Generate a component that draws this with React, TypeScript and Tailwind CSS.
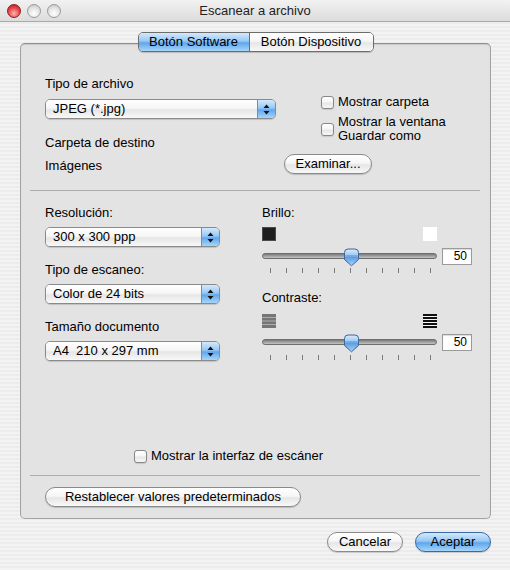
import React from 'react';

// Aqua-style controls, drawn with Tailwind classes
const glassWhite =
  'bg-[linear-gradient(to_bottom,#ffffff_0%,#f6f6f6_45%,#e6e6e6_55%,#f8f8f8_100%)]';
const glassBlue =
  'bg-[linear-gradient(to_bottom,#d4e9fc_0%,#97c8f3_45%,#5fa6ec_55%,#a6d6fb_100%)]';

function cn(...parts: (string | false | undefined)[]) {
  return parts.filter(Boolean).join(' ');
}

function Checkbox() {
  return (
    <div
      className={`w-[13px] h-[13px] shrink-0 rounded-[3px] border border-[#878787] ${glassWhite} shadow-[0_1px_1px_rgba(0,0,0,0.12)]`}
    />
  );
}

function PopUp({ value, className }: { value: string; className: string }) {
  return (
    <div
      className={`flex h-[20px] rounded-[5px] border border-[#8a8a8a] overflow-hidden shadow-[0_1px_1px_rgba(0,0,0,0.15)] ${className}`}
    >
      <div className={`flex-1 flex items-center pl-[7px] ${glassWhite}`}>{value}</div>
      <div
        className={`w-[18px] flex items-center justify-center border-l border-[#6f8fb5] ${glassBlue}`}
      >
        <svg width="7" height="11" viewBox="0 0 7 11">
          <path d="M3.5 0.5 L6.5 4 H0.5 Z" fill="#111" />
          <path d="M3.5 10.5 L6.5 7 H0.5 Z" fill="#111" />
        </svg>
      </div>
    </div>
  );
}

function PushButton({
  label,
  className,
  primary,
}: {
  label: string;
  className: string;
  primary?: boolean;
}) {
  return (
    <div
      className={cn(
        'h-[20px] rounded-full border flex items-center justify-center shadow-[0_1px_1px_rgba(0,0,0,0.18)]',
        primary ? `border-[#3a6aa3] ${glassBlue}` : `border-[#8a8a8a] ${glassWhite}`,
        className
      )}
    >
      {label}
    </div>
  );
}

function Thumb() {
  return (
    <svg width="17" height="19" viewBox="0 0 17 19" className="absolute left-[80px] top-[-6px]">
      <defs>
        <linearGradient id="thumbGrad" x1="0" y1="0" x2="0" y2="1">
          <stop offset="0" stopColor="#d8ecfd" />
          <stop offset="0.45" stopColor="#8fc3f2" />
          <stop offset="0.5" stopColor="#5a9fe6" />
          <stop offset="1" stopColor="#a9d6fb" />
        </linearGradient>
      </defs>
      <path
        d="M1.5 4.5 Q1.5 1 5 1 H12 Q15.5 1 15.5 4.5 V11.5 L8.5 17.8 L1.5 11.5 Z"
        fill="url(#thumbGrad)"
        stroke="#3f6592"
        strokeWidth="1"
      />
      <path d="M2.5 8 H14.5" stroke="#4a7fbf" strokeWidth="0.8" />
    </svg>
  );
}

function Slider() {
  return (
    <div className="flex items-center h-[18px]">
      <div className="relative w-[175px] h-[6px] rounded-full border border-[#6e6e6e] bg-[linear-gradient(to_bottom,#7a7a7a,#c4c4c4)]">
        <Thumb />
      </div>
      <div className="ml-[5px] w-[30px] h-[17px] border border-[#9a9a9a] bg-white text-[12px] leading-[15px] text-right pr-[4px] shadow-[inset_0_1px_1px_rgba(0,0,0,0.15)]">
        50
      </div>
    </div>
  );
}

function Ticks({ className }: { className: string }) {
  return (
    <div className={`flex justify-between w-[161px] ml-[8px] h-[5px] ${className}`}>
      {Array.from({ length: 11 }).map((_, i) => (
        <div key={i} className="w-px h-full bg-[#7a7a7a]" />
      ))}
    </div>
  );
}

function TrafficLight({ red }: { red?: boolean }) {
  return (
    <div
      className={cn(
        'w-[14px] h-[14px] rounded-full border',
        red
          ? 'border-[#8e1c1c] bg-[radial-gradient(circle_at_50%_70%,#ffb3a8_0%,#e5454a_55%,#b0151d_100%)]'
          : 'border-[#9b9b9b] bg-[radial-gradient(circle_at_50%_70%,#ffffff_0%,#e2e2e2_55%,#b9b9b9_100%)]'
      )}
    />
  );
}

export default function App() {
  return (
    <div className="w-[510px] h-[570px] overflow-hidden text-[13px] leading-[16px] text-black font-['Lucida_Grande','Liberation_Sans',Arial,sans-serif] bg-[repeating-linear-gradient(to_bottom,#f3f3f3_0px,#f3f3f3_2px,#ececec_2px,#ececec_4px)]">
      {/* Title bar */}
      <div className="grid grid-cols-[1fr_auto_1fr] items-center h-[22px] border-b border-[#a9a9a9] bg-[linear-gradient(to_bottom,#f2f2f2,#dcdcdc)]">
        <div className="flex items-center gap-[6px] pl-[7px]">
          <TrafficLight red />
          <TrafficLight />
          <TrafficLight />
        </div>
        <div className="text-[#222]">Escanear a archivo</div>
        <div />
      </div>

      {/* Tabs */}
      <div className="relative z-10 mt-[10px] flex justify-center">
        <div className="flex h-[20px] ml-[1px] rounded-[5px] border border-[#6d6d6d] overflow-hidden shadow-[0_1px_1px_rgba(0,0,0,0.18)]">
          <div className={`w-[110px] flex items-center justify-center ${glassBlue}`}>Botón Software</div>
          <div className={`w-[124px] flex items-center justify-center border-l border-[#6d6d6d] ${glassWhite}`}>
            Botón Dispositivo
          </div>
        </div>
      </div>

      {/* Tab box */}
      <div className="mx-[20px] -mt-[9px] w-[471px] h-[476px] rounded-[5px] border border-[#a3a3a3] border-t-[#8f8f8f] bg-[#e3e3e3] shadow-[inset_0_1px_1px_rgba(0,0,0,0.12)] flex flex-col">
        {/* File type / destination */}
        <div className="flex pl-[24px] pt-[32px]">
          <div className="w-[231px] flex flex-col">
            <div>Tipo de archivo</div>
            <PopUp value="JPEG (*.jpg)" className="w-[231px] mt-[7px]" />
            <div className="mt-[16px]">Carpeta de destino</div>
            <div className="mt-[7px]">Imágenes</div>
          </div>
          <div className="ml-[8px] flex flex-col">
            <div className="mt-[18px] pl-[37px] flex items-center gap-[4px]">
              <Checkbox />
              <span>Mostrar carpeta</span>
            </div>
            <div className="mt-[5px] pl-[37px] flex items-center gap-[4px]">
              <Checkbox />
              <span className="leading-[14px]">
                Mostrar la ventana
                <br />
                Guardar como
              </span>
            </div>
            <PushButton label="Examinar..." className="mt-[11px] w-[88px]" />
          </div>
        </div>

        <div className="mt-[16px] ml-[9px] mr-[10px] border-t border-[#adadad]" />

        {/* Scan settings */}
        <div className="flex pl-[24px] mt-[14px]">
          <div className="w-[175px] flex flex-col">
            <div>Resolución:</div>
            <PopUp value="300 x 300 ppp" className="w-[175px] mt-[6px]" />
            <div className="mt-[15px]">Tipo de escaneo:</div>
            <PopUp value="Color de 24 bits" className="w-[175px] mt-[6px]" />
            <div className="mt-[15px]">Tamaño documento</div>
            <PopUp value="A4  210 x 297 mm" className="w-[175px] mt-[6px] whitespace-pre" />
          </div>
          <div className="ml-[42px] w-[210px] flex flex-col">
            <div>Brillo:</div>
            <div className="mt-[6px] w-[175px] flex justify-between">
              <div className="w-[14px] h-[14px] bg-[#1e1e1e] border border-[#4a4a4a]" />
              <div className="w-[14px] h-[14px] bg-white" />
            </div>
            <div className="mt-[6px]">
              <Slider />
            </div>
            <Ticks className="mt-[3px]" />
            <div className="mt-[17px]">Contraste:</div>
            <div className="mt-[8px] w-[175px] flex justify-between">
              <svg width="14" height="14" viewBox="0 0 14 14">
                <rect x="0" y="0" width="14" height="14" fill="#767676" />
                <rect x="0" y="3" width="14" height="1" fill="#adadad" />
                <rect x="0" y="6.5" width="14" height="1" fill="#adadad" />
                <rect x="0" y="10" width="14" height="1" fill="#adadad" />
              </svg>
              <svg width="14" height="14" viewBox="0 0 14 14">
                <rect x="0" y="0" width="14" height="14" fill="#f7f7f7" />
                <rect x="0" y="0" width="14" height="2" fill="#111" />
                <rect x="0" y="3" width="14" height="2" fill="#111" />
                <rect x="0" y="6" width="14" height="2" fill="#111" />
                <rect x="0" y="9" width="14" height="2" fill="#111" />
                <rect x="0" y="12" width="14" height="2" fill="#111" />
              </svg>
            </div>
            <div className="mt-[5px]">
              <Slider />
            </div>
            <Ticks className="mt-[4px]" />
          </div>
        </div>

        {/* Scanner interface */}
        <div className="mt-[87px] pl-[113px] flex items-center gap-[4px]">
          <Checkbox />
          <span>Mostrar la interfaz de escáner</span>
        </div>

        <div className="mt-[11px] ml-[9px] mr-[10px] border-t border-[#adadad]" />

        <div className="mt-[11px] pl-[24px]">
          <PushButton label="Restablecer valores predeterminados" className="w-[256px]" />
        </div>
      </div>

      {/* Dialog buttons */}
      <div className="mt-[13px] flex justify-end gap-[12px] pr-[19px]">
        <PushButton label="Cancelar" className="w-[76px]" />
        <PushButton label="Aceptar" className="w-[76px]" primary />
      </div>
    </div>
  );
}
